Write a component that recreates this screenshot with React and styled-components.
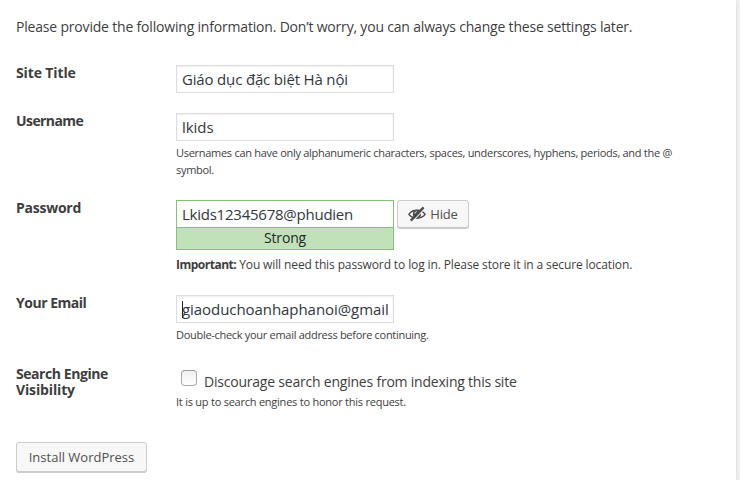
import React from "react";
import styled, { createGlobalStyle } from "styled-components";

const Global = createGlobalStyle`
  * { box-sizing: border-box; }
  body { margin: 0; background: #f1f1f1; }
`;

const Page = styled.div`
  height: 480px;
  padding-right: 4px;
  overflow: hidden;
  background: #f1f1f1;
  color: #3e3e3e;
  font-family: "Open Sans", "Noto Sans", sans-serif;
`;

const Panel = styled.main`
  height: 480px;
  padding: 17px 16px 0;
  background: #fff;
  box-shadow: 0 1px 3px rgba(0, 0, 0, 0.13);
`;

const Intro = styled.p`
  margin: 0 0 28px;
  font-size: 14px;
  line-height: 20px;
  letter-spacing: -0.188px;
  white-space: nowrap;
`;

const Row = styled.div`
  display: grid;
  grid-template-columns: 160px 1fr;
  height: ${(p) => p.$height}px;
`;

const Label = styled.label`
  width: 120px;
  font-size: 14px;
  font-weight: 700;
  line-height: 16px;
  letter-spacing: ${(p) => p.$spacing ?? -0.42}px;
`;

const LabelLine = styled.span`
  display: block;
  letter-spacing: ${(p) => p.$spacing}px;
`;

const Field = styled.div`
  display: flex;
  flex-direction: column;
  align-items: flex-start;
`;

const TextInput = styled.input`
  display: block;
  width: 218px;
  height: 28px;
  margin: 0;
  padding: 2px 5px 3px;
  border: 1px solid ${(p) => (p.$strong ? "#83c373" : "#ddd")};
  border-radius: 0;
  outline: 0;
  background: #fff;
  box-shadow: ${(p) => (p.$strong ? "none" : "inset 0 1px 2px rgba(0, 0, 0, 0.07)")};
  color: #32373c;
  font: 15px/21px "Open Sans", "Noto Sans", sans-serif;
  letter-spacing: ${(p) => p.$spacing}px;
`;

const Hint = styled.p`
  margin: ${(p) => p.$top ?? 3}px 0 0;
  font-size: 11px;
  line-height: 17px;
  letter-spacing: ${(p) => p.$spacing ?? -0.285}px;
  white-space: pre-line;
`;

const Notice = styled.p`
  margin: 6px 0 0;
  font-size: 12px;
  line-height: 18px;
  letter-spacing: -0.12px;
  white-space: nowrap;
`;

const Important = styled.strong`
  font-weight: 700;
  letter-spacing: -0.5px;
`;

const PasswordLine = styled.div`
  display: flex;
  align-items: flex-start;
  gap: 3px;
`;

const PasswordBox = styled.div`
  width: 218px;
`;

const Strength = styled.div`
  height: 22px;
  border: 1px solid #83c373;
  border-top: 0;
  background: #c1e1b9;
  color: #23282d;
  font-size: 14px;
  line-height: 20px;
  letter-spacing: -0.16px;
  text-align: center;
`;

const Button = styled.button`
  display: inline-flex;
  align-items: center;
  justify-content: center;
  gap: 4px;
  width: ${(p) => p.$width}px;
  height: ${(p) => p.$height}px;
  padding: 0;
  border: 1px solid #ccc;
  border-radius: 3px;
  background: #f7f7f7;
  box-shadow: 0 1px 0 #ccc;
  color: #505050;
  font: 13px/18px "Open Sans", sans-serif;
  letter-spacing: ${(p) => p.$spacing ?? 0}px;
`;

const EyeSvg = styled.svg`
  display: block;
  width: 18px;
  height: 16px;
`;

const EmailBox = styled.div`
  position: relative;
`;

const Caret = styled.span`
  position: absolute;
  left: 6px;
  top: 6px;
  width: 1px;
  height: 17px;
  background: #222;
`;

const CheckLine = styled.label`
  display: flex;
  align-items: flex-start;
  gap: 7px;
  padding: 4px 0 0 5px;
  height: 27px;
`;

const Checkbox = styled.input`
  appearance: none;
  width: 16px;
  height: 16px;
  margin: 0;
  border: 1px solid #aaa;
  border-top-color: #999;
  border-radius: 4px;
  background: linear-gradient(#f0f0f0, #fff);
`;

const CheckText = styled.span`
  padding-top: 2px;
  font-size: 14px;
  line-height: 20px;
  letter-spacing: -0.215px;
`;

function HiddenEye() {
  return (
    <EyeSvg viewBox="0 0 18 16" aria-hidden="true">
      <path d="M0.9 8.4C4.6 3 13.4 3 17.1 8.4C13.4 13.4 4.6 13.4 0.9 8.4Z" fill="none" stroke="#4c4c4c" strokeWidth="1.5" />
      <circle cx="9" cy="7.9" r="4.1" fill="#4c4c4c" />
      <path d="M6.9 7.6C6.9 6.4 7.7 5.6 8.7 5.6" fill="none" stroke="#f7f7f7" strokeWidth="1" />
      <path d="M4.4 15.4L16.8 2.7" stroke="#f7f7f7" strokeWidth="1.2" />
      <path d="M2.8 14.6L15.6 1.4" stroke="#4c4c4c" strokeWidth="2.4" />
    </EyeSvg>
  );
}

export default function App() {
  return (
    <Page>
      <Global />
      <Panel>
        <Intro>
          Please provide the following information. Don’t worry, you can always change these settings later.
        </Intro>
        <Row $height={48}>
          <Label htmlFor="title" $spacing={-0.12}>Site Title</Label>
          <Field>
            <TextInput id="title" defaultValue="Giáo dục đặc biệt Hà nội" $spacing={-0.17} />
          </Field>
        </Row>
        <Row $height={87}>
          <Label htmlFor="user" $spacing={-0.58}>Username</Label>
          <Field>
            <TextInput id="user" defaultValue="lkids" $spacing={-0.05} />
            <Hint>
              {"Usernames can have only alphanumeric characters, spaces, underscores, hyphens, periods, and the @\nsymbol."}
            </Hint>
          </Field>
        </Row>
        <Row $height={95}>
          <Label htmlFor="password" $spacing={-0.25}>Password</Label>
          <Field>
            <PasswordLine>
              <PasswordBox>
                <TextInput id="password" defaultValue="Lkids12345678@phudien" $strong $spacing={-0.24} />
                <Strength>Strong</Strength>
              </PasswordBox>
              <Button type="button" $width={72} $height={28} $spacing={-0.2}>
                <HiddenEye />
                Hide
              </Button>
            </PasswordLine>
            <Notice>
              <Important>Important:</Important> You will need this password to log in. Please store it in a secure
              location.
            </Notice>
          </Field>
        </Row>
        <Row $height={71}>
          <Label htmlFor="email" $spacing={-0.48}>Your Email</Label>
          <Field>
            <EmailBox>
              <TextInput id="email" defaultValue="giaoduchoanhaphanoi@gmail" $spacing={-0.06} />
              <Caret />
            </EmailBox>
            <Hint $spacing={-0.295}>Double-check your email address before continuing.</Hint>
          </Field>
        </Row>
        <Row $height={76}>
          <Label htmlFor="visibility">
            <LabelLine $spacing={-0.44}>Search Engine</LabelLine>
            <LabelLine $spacing={-0.14}>Visibility</LabelLine>
          </Label>
          <Field>
            <CheckLine>
              <Checkbox id="visibility" type="checkbox" />
              <CheckText>Discourage search engines from indexing this site</CheckText>
            </CheckLine>
            <Hint $top={0} $spacing={-0.235}>It is up to search engines to honor this request.</Hint>
          </Field>
        </Row>
        <Button type="button" $width={131} $height={30}>Install WordPress</Button>
      </Panel>
    </Page>
  );
}
